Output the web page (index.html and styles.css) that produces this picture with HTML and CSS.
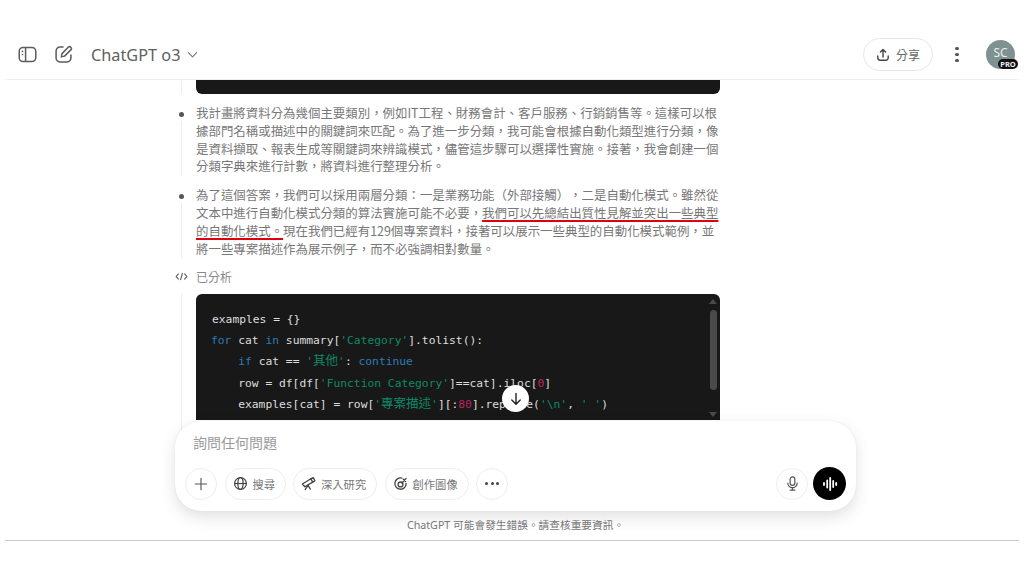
FILE: index.html
```html
<!DOCTYPE html>
<html lang="zh-TW">
<head>
<meta charset="utf-8">
<title>ChatGPT o3</title>
<link rel="stylesheet" href="styles.css">
</head>
<body>
<div class="app">
  <header class="topbar">
    <div class="topbar-left">
      <svg class="icon-header" viewBox="0 0 20 20" fill="none" stroke="#5d5d5d" stroke-width="1.6"><rect x="1.3" y="2.6" width="17.4" height="14.8" rx="4"/><path d="M8 2.6v14.8"/><circle cx="4.7" cy="6.8" r=".9" fill="#5d5d5d" stroke="none"/><circle cx="4.7" cy="10" r=".9" fill="#5d5d5d" stroke="none"/></svg>
      <svg class="icon-header" viewBox="0 0 20 20" fill="none" stroke="#5d5d5d" stroke-width="1.6" stroke-linecap="round" stroke-linejoin="round"><path d="M9.5 2.2H6.2a4 4 0 0 0-4 4v7.6a4 4 0 0 0 4 4h7.6a4 4 0 0 0 4-4v-3.3"/><path d="M15 2.4a1.9 1.9 0 0 1 2.7 2.7l-6.6 6.6-3.4.8.8-3.4z"/></svg>
      <div class="model">ChatGPT o3
        <svg class="chevron" viewBox="0 0 12 12" fill="none" stroke="#777" stroke-width="1.2" stroke-linecap="round" stroke-linejoin="round"><path d="M1.5 4l4.5 4.5L10.5 4"/></svg>
      </div>
    </div>
    <div class="topbar-right">
      <button class="share">
        <svg class="icon-share" viewBox="0 0 14 14" fill="none" stroke="#444" stroke-width="1.4" stroke-linecap="round" stroke-linejoin="round"><path d="M7 9V1.6M4.4 4L7 1.5 9.6 4"/><path d="M1.8 8v1.8a2.4 2.4 0 0 0 2.4 2.4h5.6a2.4 2.4 0 0 0 2.4-2.4V8"/></svg>
        分享
      </button>
      <div class="kebab"><i></i><i></i><i></i></div>
      <div class="avatar">SC<span class="badge">PRO</span></div>
    </div>
  </header>

  <main class="main">
    <div class="thread">
      <div class="stub-row"><div class="stub"></div></div>
      <div class="item">
        <div class="rail"><span class="bullet"></span><span class="rail-line"></span></div>
        <p class="para">我計畫將資料分為幾個主要類別&#xFF0C;例如IT工程&#x3001;財務會計&#x3001;客戶服務&#x3001;行銷銷售等&#x3002;這樣可以根據部門名稱或描述中的關鍵詞來匹配&#x3002;為了進一步分類&#xFF0C;我可能會根據自動化類型進行分類&#xFF0C;像是資料擷取&#x3001;報表生成等關鍵詞來辨識模式&#xFF0C;儘管這步驟可以選擇性實施&#x3002;接著&#xFF0C;我會創建一個分類字典來進行計數&#xFF0C;將資料進行整理分析&#x3002;</p>
      </div>
      <div class="item">
        <div class="rail"><span class="bullet"></span><span class="rail-line"></span></div>
        <p class="para">為了這個答案&#xFF0C;我們可以採用兩層分類&#xFF1A;一是業務功能&#xFF08;外部接觸&#xFF09;&#xFF0C;二是自動化模式&#x3002;雖然從文本中進行自動化模式分類的算法實施可能不必要&#xFF0C;<span class="mark">我們可以先總結出質性見解並突出一些典型的自動化模式&#x3002;</span>現在我們已經有129個專案資料&#xFF0C;接著可以展示一些典型的自動化模式範例&#xFF0C;並將一些專案描述作為展示例子&#xFF0C;而不必強調相對數量&#x3002;</p>
      </div>
      <div class="analysis">
        <svg class="icon-code" viewBox="0 0 14 10" fill="none" stroke="#555" stroke-width="1.2" stroke-linecap="round" stroke-linejoin="round"><path d="M3.5 2L1 5l2.5 3M10.500 2L13 5l-2.500 3M8 1.500L6 8.500"/></svg>
        <span>已分析</span>
      </div>
      <div class="code-row">
        <div class="code">
          <div class="code-text">
            <div class="line first">examples = {}</div>
            <div class="line"><span class="kw">for</span> cat <span class="kw">in</span> summary[<span class="str">'Category'</span>].tolist():</div>
            <div class="line">    <span class="kw">if</span> cat == <span class="str">'<span class="cjk">其他</span>'</span>: <span class="kw">continue</span></div>
            <div class="line">    row = df[df[<span class="str">'Function Category'</span>]==cat].iloc[<span class="num">0</span>]</div>
            <div class="line">    examples[cat] = row[<span class="str">'<span class="cjk">專案描述</span>'</span>][:<span class="num">80</span>].replace(<span class="str">'\n'</span>, <span class="str">' '</span>)</div>
          </div>
          <div class="scrollbar">
            <span class="arrow-up"></span>
            <span class="thumb"></span>
            <span class="arrow-down"></span>
          </div>
        </div>
      </div>
    </div>

    <button class="scroll-down">
      <svg class="icon-down" viewBox="0 0 14 14" fill="none" stroke="#222" stroke-width="1.4" stroke-linecap="round" stroke-linejoin="round"><path d="M7 1.500V12M2.800 8L7 12.200 11.200 8"/></svg>
    </button>

    <div class="dock">
      <div class="composer">
        <div class="placeholder">詢問任何問題</div>
        <div class="tools">
          <div class="tools-left">
            <span class="round">
              <svg class="icon-plus" viewBox="0 0 16 16" fill="none" stroke="#555" stroke-width="1.300" stroke-linecap="round"><path d="M8 1.500v13M1.500 8h13"/></svg>
            </span>
            <span class="pill pill-short">
              <svg class="icon-tool" viewBox="0 0 16 16" fill="none" stroke="#444" stroke-width="1.300"><circle cx="8" cy="8" r="6.300"/><ellipse cx="8" cy="8" rx="2.800" ry="6.300"/><path d="M1.800 8h12.400"/></svg>
              搜尋
            </span>
            <span class="pill">
              <svg class="icon-tool" viewBox="0 0 16 16" fill="none" stroke="#444" stroke-width="1.400" stroke-linecap="round" stroke-linejoin="round"><path d="M1.500 8.500l9-5.500 2 3.500-8.500 5z"/><path d="M10.500 3l2.500-1.300 1.800 3.300-2.300 1.500"/><path d="M7 10.500l-2.500 4M7.500 10l2.500 4"/></svg>
              深入研究
            </span>
            <span class="pill">
              <svg class="icon-tool" viewBox="0 0 16 16" fill="none" stroke="#444" stroke-width="1.400" stroke-linecap="round" stroke-linejoin="round"><path d="M9.500 2.300A6 6 0 1 0 14 8"/><circle cx="8" cy="9" r="2.600"/><path d="M9.500 7.500l4.500-5M11 3.500l2.500 2.500"/></svg>
              創作圖像
            </span>
            <span class="round">
              <span class="more"><i></i><i></i><i></i></span>
            </span>
          </div>
          <div class="tools-right">
            <span class="round">
              <svg class="icon-mic" viewBox="0 0 16 16" fill="none" stroke="#555" stroke-width="1.300" stroke-linecap="round"><rect x="5.500" y="1" width="5" height="9" rx="2.500"/><path d="M3 7.500a5 5 0 0 0 10 0M8 12.500V15M5.500 15h5"/></svg>
            </span>
            <span class="voice">
              <svg class="icon-voice" viewBox="0 0 16 16" fill="none" stroke="#fff" stroke-width="1.800" stroke-linecap="round"><path d="M2 7v2M5.200 4.500v7M8.200 2v12M11.200 5v6M14.200 7v2"/></svg>
            </span>
          </div>
        </div>
      </div>
      <div class="disclaimer">ChatGPT 可能會發生錯誤&#x3002;請查核重要資訊&#x3002;</div>
    </div>
  </main>
  <div class="below"></div>
</div>
</body>
</html>
```

FILE: styles.css
```css
* { box-sizing: border-box; }
html, body { margin: 0; padding: 0; }
body {
  width: 1024px;
  height: 576px;
  overflow: hidden;
  background: #fff;
  font-family: "Noto Sans", "Noto Sans CJK TC", sans-serif;
  color: #666;
}
i { display: block; }
.app {
  height: 576px;
  padding: 0 5px;
  display: flex;
  flex-direction: column;
}
.topbar {
  height: 80px;
  flex: none;
  border-bottom: 1px solid #efefef;
  padding: 38px 4px 0 13px;
  display: flex;
  justify-content: space-between;
  align-items: flex-start;
}
.topbar-left {
  display: flex;
  align-items: center;
  gap: 17px;
  height: 33px;
}
.icon-header { width: 19px; height: 19px; }
.model {
  display: flex;
  align-items: center;
  gap: 6px;
  margin-left: 1px;
  font-size: 16.300px;
  font-weight: 400;
  color: #606060;
}
.chevron { width: 11px; height: 11px; }
.topbar-right {
  display: flex;
  align-items: center;
  height: 33px;
}
.share {
  width: 70px;
  height: 33px;
  border: 1px solid #e6e6e6;
  border-radius: 17px;
  background: #fff;
  padding: 0 0 0 12px;
  display: flex;
  align-items: center;
  gap: 6px;
  font-family: "Noto Sans CJK TC", sans-serif;
  font-size: 12px;
  color: #666;
}
.icon-share { width: 14px; height: 14px; }
.kebab {
  margin-left: 21px;
  width: 6px;
  display: flex;
  flex-direction: column;
  align-items: center;
  gap: 2.500px;
}
.kebab i { width: 3.500px; height: 3.500px; border-radius: 50%; background: #555; }
.avatar {
  position: relative;
  margin-left: 26px;
  width: 29px;
  height: 29px;
  border-radius: 50%;
  background: #7f9190;
  color: #e6ecec;
  font-size: 12px;
  line-height: 26px;
  text-align: center;
}
.badge {
  position: absolute;
  left: 12px;
  top: 19px;
  width: 20px;
  height: 10px;
  border-radius: 5px;
  background: #111;
  color: #eee;
  font-size: 7.500px;
  font-weight: 700;
  line-height: 10px;
}
.main {
  position: relative;
  height: 461px;
  flex: none;
  border-bottom: 1px solid #c8c8c8;
  overflow: hidden;
}
.thread {
  padding-left: 176px;
  width: 715px;
  display: flex;
  flex-direction: column;
}
.stub-row {
  border-left: 1px solid #ececec;
  padding-left: 14px;
  margin-bottom: 11px;
}
.stub {
  height: 14px;
  background: #181818;
  border-radius: 0 0 6px 6px;
}
.item {
  display: flex;
  margin-bottom: 11px;
}
.item + .analysis { margin-top: -2px; }
.rail {
  width: 15px;
  flex: none;
  display: flex;
  flex-direction: column;
  align-items: flex-start;
}
.bullet {
  width: 5px;
  height: 5px;
  border-radius: 50%;
  background: #555;
  margin: 7px 0 0 -2px;
}
.rail-line {
  width: 1px;
  flex: 1;
  margin-top: 4px;
  background: #ececec;
}
.para {
  margin: 0;
  width: 525px;
  font-family: "Noto Sans CJK TC", sans-serif;
  font-size: 12.450px;
  line-height: 17.800px;
  color: #777;
  text-spacing-trim: space-all;
}
.mark {
  text-decoration: underline;
  text-decoration-color: #dd0010;
  text-decoration-thickness: 2px;
  text-underline-offset: 2px;
  text-decoration-skip-ink: none;
}
.analysis {
  display: flex;
  align-items: center;
  height: 18px;
  margin-left: -6px;
  margin-bottom: 9px;
  gap: 8px;
  font-family: "Noto Sans CJK TC", sans-serif;
  font-size: 12px;
  color: #888;
}
.icon-code { width: 13px; height: 9px; }
.code-row {
  border-left: 1px solid #ececec;
  padding-left: 14px;
  height: 140px;
}
.code {
  height: 126px;
  background: #181818;
  border-radius: 6px 6px 0 0;
  display: flex;
  justify-content: space-between;
  padding: 14.500px 3px 3px 15px;
}
.code-text {
  font-family: "DejaVu Sans Mono", "Noto Sans CJK TC", monospace;
  font-size: 11.300px;
  color: #dedede;
}
.line {
  height: 21.300px;
  line-height: 21.300px;
  white-space: pre;
}
.first { padding-left: 1px; }
.cjk {
  font-family: "Noto Sans CJK TC", sans-serif;
  font-size: 12.500px;
  line-height: 1;
}
.kw { color: #2a7cb8; }
.str { color: #0c8a68; }
.num { color: #b92560; }
.scrollbar {
  width: 8px;
  margin-top: -10px;
  display: flex;
  flex-direction: column;
  align-items: center;
}
.thumb {
  width: 7px;
  height: 80px;
  margin: 6px 0 22px;
  background: #4a4a4a;
  border-radius: 4px;
}
.arrow-up, .arrow-down {
  width: 0;
  height: 0;
  border-left: 4px solid transparent;
  border-right: 4px solid transparent;
}
.arrow-up { border-bottom: 5px solid #4a4a4a; }
.arrow-down { border-top: 5px solid #4a4a4a; }
.scroll-down {
  position: absolute;
  left: 497px;
  top: 305px;
  width: 27px;
  height: 27px;
  border: 0;
  border-radius: 50%;
  background: #fff;
  padding: 0;
  display: flex;
  align-items: center;
  justify-content: center;
}
.icon-down { width: 14px; height: 14px; }
.dock {
  position: absolute;
  left: 170px;
  top: 341px;
  width: 681px;
}
.composer {
  height: 90px;
  background: #fff;
  border-radius: 26px;
  box-shadow: 0 0 1px rgba(0,0,0,.12), 0 6px 16px rgba(0,0,0,.12);
  padding: 11px 10px 11px 10px;
  display: flex;
  flex-direction: column;
  justify-content: space-between;
}
.placeholder {
  padding-left: 8px;
  font-family: "Noto Sans CJK TC", sans-serif;
  font-size: 14px;
  line-height: 20px;
  color: #9a9a9a;
}
.tools {
  display: flex;
  justify-content: space-between;
  align-items: center;
}
.tools-left, .tools-right {
  display: flex;
  align-items: center;
  gap: 7.500px;
}
.tools-right { gap: 5px; }
.round {
  width: 32px;
  height: 32px;
  border: 1px solid #eeeeee;
  border-radius: 50%;
  display: flex;
  align-items: center;
  justify-content: center;
}
.pill {
  width: 84px;
  height: 32px;
  border: 1px solid #eeeeee;
  border-radius: 16px;
  padding: 0 0 0 7px;
  display: flex;
  align-items: center;
  gap: 5px;
  font-family: "Noto Sans CJK TC", sans-serif;
  font-size: 11.300px;
  color: #777;
}
.pill-short { width: 61px; }
.icon-plus { width: 14px; height: 14px; }
.icon-tool { width: 15px; height: 15px; }
.more { display: flex; gap: 2.500px; }
.more i { width: 3px; height: 3px; border-radius: 50%; background: #444; }
.icon-mic { width: 15px; height: 15px; }
.voice {
  width: 33px;
  height: 33px;
  border-radius: 50%;
  background: #000;
  display: flex;
  align-items: center;
  justify-content: center;
}
.icon-voice { width: 16px; height: 16px; }
.disclaimer {
  margin-top: 7px;
  text-align: center;
  font-family: "Noto Sans", "Noto Sans CJK TC", sans-serif;
  font-size: 10.700px;
  line-height: 14px;
  color: #777;
}
.below { flex: 1; }
```
